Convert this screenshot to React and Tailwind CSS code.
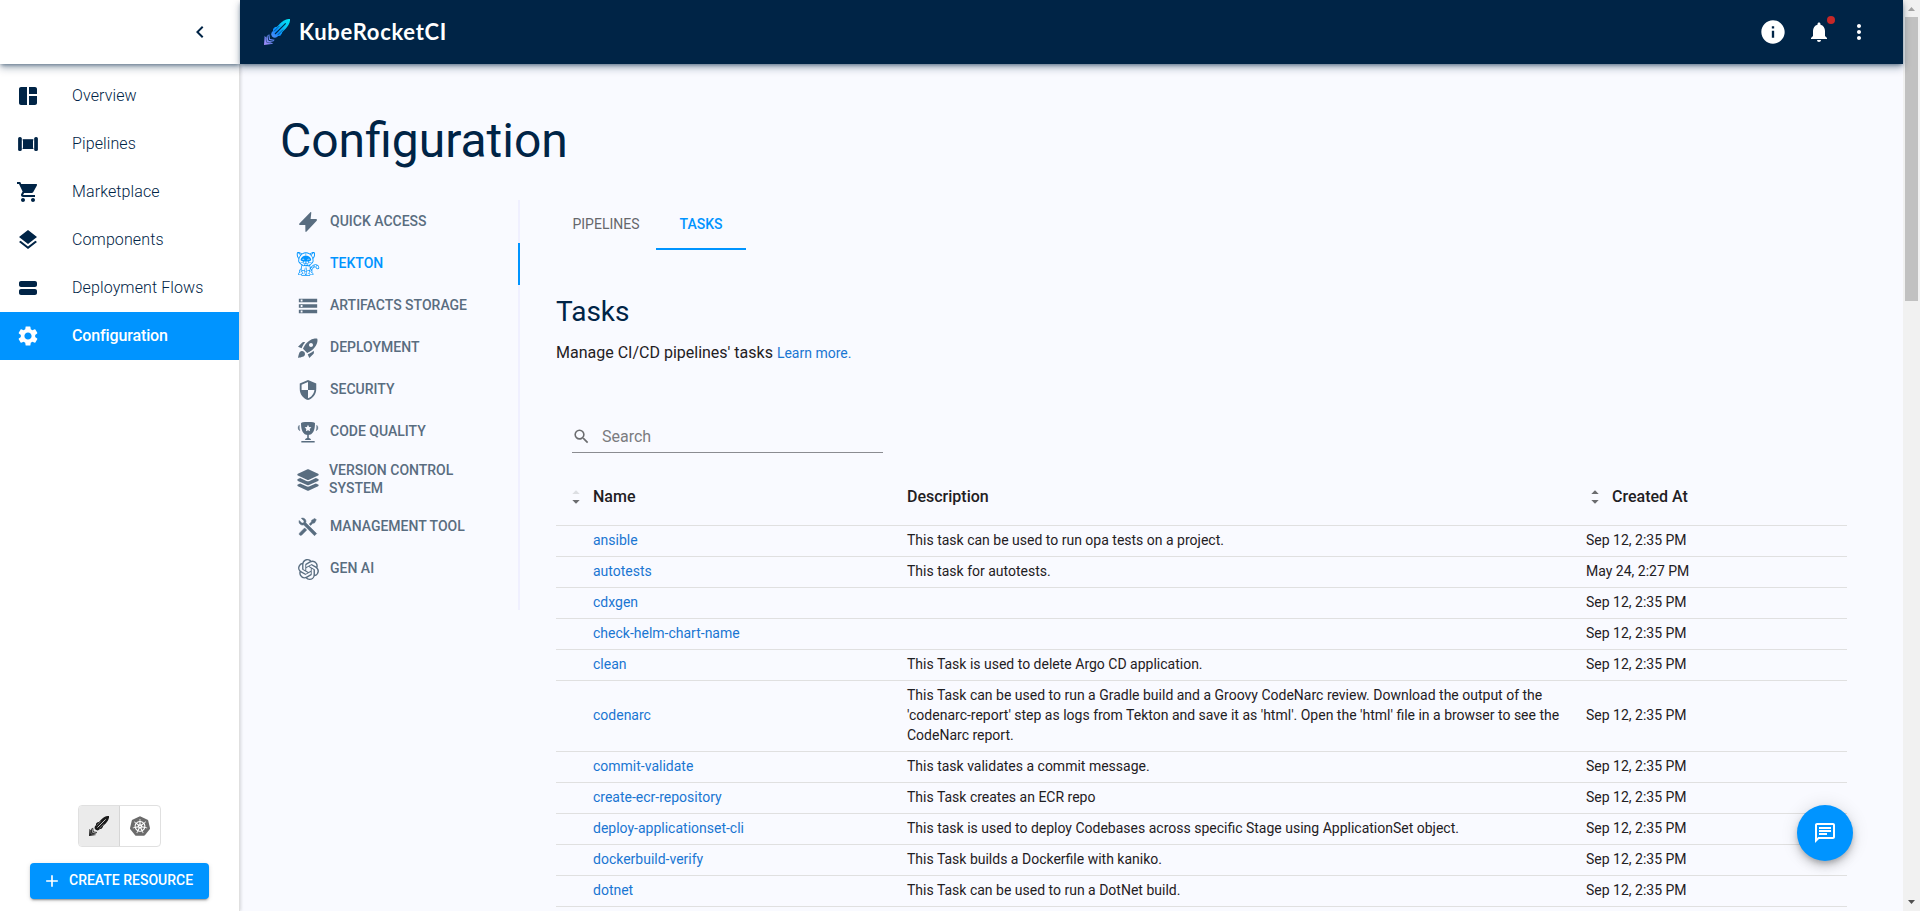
import React from "react";
import {
  MdSpaceDashboard,
  MdShoppingCart,
  MdLayers,
  MdViewStream,
  MdSettings,
  MdStorage,
  MdRocketLaunch,
  MdSecurity,
  MdOutlineChat,
  MdInfo,
  MdNotifications,
  MdMoreVert,
  MdChevronLeft,
  MdSearch,
  MdAdd,
} from "react-icons/md";
import { SiTekton, SiOpenai, SiKubernetes } from "react-icons/si";
import { RiToolsFill } from "react-icons/ri";
import { FaLayerGroup } from "react-icons/fa6";

function PipelineIcon({ size = 24 }) {
  return (
    <svg width={size} height={size} viewBox="0 0 24 24" fill="currentColor">
      <rect x="2.1" y="5" width="3.7" height="14" rx="1.6" />
      <rect x="18.2" y="5" width="3.7" height="14" rx="1.6" />
      <rect x="7" y="7.2" width="10" height="9.8" />
      <path d="M5.8 7.9h1.2M5.8 16.4h1.2M17 7.9h1.2M17 16.4h1.2" stroke="currentColor" strokeWidth="0.8" opacity="0.5" />
    </svg>
  );
}

function BoltIcon({ size = 24 }) {
  return (
    <svg width={size} height={size} viewBox="0 0 24 24" fill="currentColor">
      <path d="M14.4 2.2c.5-.4 1-.1.9.5l-.7 6.4h5.5c.9 0 1.2.9.6 1.6L10.6 21.6c-.6.6-1.2.4-1.2-.4L9.3 15H4.2c-1 0-1.4-.9-.8-1.6z" />
    </svg>
  );
}

function TrophyIcon({ size = 24 }) {
  return (
    <svg width={size} height={size} viewBox="0 0 24 24" fill="currentColor">
      <path
        fillRule="evenodd"
        d="M5 3.2C5 2.3 7.500 2 12 2s7 .3 7 1.200C19 10 17 15 12 15S5 10 5 3.200zM12 4.800l-1.050 2.150-2.350.33 1.700 1.650-.4 2.350L12 10.200l2.100 1.080-.4-2.350 1.700-1.650-2.350-.33z"
      />
      <path d="M3.300 5.200C2.400 6 2.100 7 2.200 8.300c.1 1.200.6 2 1.600 2.500-.5-1.600-.7-3.500-.5-5.600zM20.700 5.200c.9.8 1.200 1.800 1.100 3.100-.1 1.200-.6 2-1.600 2.500.5-1.600.7-3.500.5-5.600z" stroke="currentColor" strokeWidth="0.4" />
      <path d="M11.200 14.500h1.600v4.300h-1.600z" />
      <path d="M9 19.900c.2-1.500 1.500-2 3-2s2.800.5 3 2z" />
      <rect x="5.300" y="20.900" width="13.400" height="1.700" rx=".3" />
    </svg>
  );
}

function ToolsIcon({ size = 24 }) {
  return <RiToolsFill size={size} stroke="currentColor" strokeWidth="0.5" />;
}

function RocketMark({ size, fill, line }) {
  return (
    <svg width={size} height={size} viewBox="0 0 78 78">
      <defs>
        <linearGradient id="rocketFill" x1="78" y1="0" x2="0" y2="78" gradientUnits="userSpaceOnUse">
          <stop offset="0" stopColor="#00e5f5" />
          <stop offset="0.24" stopColor="#06c8f5" />
          <stop offset="0.5" stopColor="#0a8cff" />
          <stop offset="0.7" stopColor="#5a8cf5" />
          <stop offset="1" stopColor="#a78bfa" />
        </linearGradient>
      </defs>
      <g fill={fill}>
        <path d="M78 0C79 11 73 21 65 29L39 54C35 57 29 57 25 53C21 49 21 43 24 39L49 13C57 5 67-1 78 0Z" />
        <path d="M27 30L33 24L42 23L46 17L50 22L28 44Z" />
        <path d="M56 33L54 43L49 50L37 52L34 48L58 27Z" />
        <path d="M2 50L7 57L9 50L16 46L18 60L32 62L27 69L19 70L28 74L0 78Z" />
      </g>
      <g fill="none" stroke={line}>
        <path d="M65 13L33 45" strokeWidth="3.200" />
        <path d="M46 21L30 37" strokeWidth="1.600" />
        <path d="M57 32L41 48" strokeWidth="1.600" />
        <path d="M12 49L14 64L29 67" strokeWidth="2.600" />
        <path d="M6 57L8 70L22 72" strokeWidth="1.300" />
      </g>
    </svg>
  );
}

const navItems = [
  { label: "Overview", icon: MdSpaceDashboard },
  { label: "Pipelines", icon: PipelineIcon },
  { label: "Marketplace", icon: MdShoppingCart },
  { label: "Components", icon: MdLayers },
  { label: "Deployment Flows", icon: MdViewStream },
  { label: "Configuration", icon: MdSettings, active: true },
];

const sections = [
  { label: "Quick access", icon: BoltIcon, size: 24 },
  { label: "Tekton", icon: SiTekton, size: 24, active: true },
  { label: "Artifacts storage", icon: MdStorage, size: 22 },
  { label: "Deployment", icon: MdRocketLaunch, size: 24 },
  { label: "Security", icon: MdSecurity, size: 22 },
  { label: "Code quality", icon: TrophyIcon, size: 24 },
  { label: "Version Control System", icon: FaLayerGroup, size: 24, tall: true },
  { label: "Management tool", icon: ToolsIcon, size: 26 },
  { label: "Gen AI", icon: SiOpenai, size: 21 },
];

const tasks = [
  ["ansible", "This task can be used to run opa tests on a project.", "Sep 12, 2:35 PM"],
  ["autotests", "This task for autotests.", "May 24, 2:27 PM"],
  ["cdxgen", "", "Sep 12, 2:35 PM"],
  ["check-helm-chart-name", "", "Sep 12, 2:35 PM"],
  ["clean", "This Task is used to delete Argo CD application.", "Sep 12, 2:35 PM"],
  [
    "codenarc",
    "This Task can be used to run a Gradle build and a Groovy CodeNarc review. Download the output of the 'codenarc-report' step as logs from Tekton and save it as 'html'. Open the 'html' file in a browser to see the CodeNarc report.",
    "Sep 12, 2:35 PM",
  ],
  ["commit-validate", "This task validates a commit message.", "Sep 12, 2:35 PM"],
  ["create-ecr-repository", "This Task creates an ECR repo", "Sep 12, 2:35 PM"],
  ["deploy-applicationset-cli", "This task is used to deploy Codebases across specific Stage using ApplicationSet object.", "Sep 12, 2:35 PM"],
  ["dockerbuild-verify", "This Task builds a Dockerfile with kaniko.", "Sep 12, 2:35 PM"],
  ["dotnet", "This Task can be used to run a DotNet build.", "Sep 12, 2:35 PM"],
];

function SortArrows({ upClass }) {
  return (
    <svg width="8" height="14" viewBox="0 0 8 14" className="text-[#6b6c6f]" fill="currentColor">
      <path d="M0.300 4L4 0.300L7.700 4z" className={upClass} />
      <path d="M0.300 10L4 13.700L7.700 10z" />
    </svg>
  );
}

function Sidebar() {
  return (
    <aside className="relative z-10 flex w-60 shrink-0 flex-col border-r border-[#e0e0e0] bg-white shadow-[1px_0_3px_rgba(0,0,0,0.14)]">
      <div className="z-10 -mr-px flex h-16 shrink-0 items-center justify-end bg-white pr-7 text-[#002446] shadow-[0_2px_4px_-1px_rgba(0,36,70,0.5),0_4px_8px_rgba(0,36,70,0.3)]">
        <MdChevronLeft size={24} />
      </div>
      <nav className="pt-2">
        {navItems.map(({ label, icon: Icon, active }) => (
          <a
            key={label}
            className={
              active
                ? "flex h-12 items-center gap-8 bg-[#0094ff] pl-4 text-base font-medium tracking-[-0.008em] text-white"
                : "flex h-12 items-center gap-8 pl-4 text-base font-light tracking-[0.007em] text-[#002446]"
            }
          >
            <Icon size={24} />
            <span>{label}</span>
          </a>
        ))}
      </nav>
      <div className="mt-auto flex flex-col items-center gap-4 pb-3">
        <div className="flex h-[42px] w-[83px] overflow-hidden rounded border border-[#e0e0e0]">
          <button className="flex w-[41px] items-center justify-center border-r border-[#d6d6d6] bg-[#ebebeb]">
            <RocketMark size={20} fill="#1a1a1a" line="#ebebeb" />
          </button>
          <button className="flex flex-1 items-center justify-center pr-px text-[#6b6b6b]">
            <SiKubernetes size={20} />
          </button>
        </div>
        <button className="flex h-9 w-[179px] items-center rounded bg-[#0094ff] pl-3 text-sm font-medium text-white shadow-[0_3px_1px_-2px_rgba(0,0,0,0.2),0_2px_2px_rgba(0,0,0,0.14),0_1px_5px_rgba(0,0,0,0.12)]">
          <MdAdd size={20} />
          <span className="pb-0.5 pl-[7px] uppercase">Create resource</span>
        </button>
      </div>
    </aside>
  );
}

function Header() {
  return (
    <header className="z-20 flex h-16 shrink-0 items-center bg-[#002446] pr-8 pl-6 text-white shadow-[0_2px_4px_-1px_rgba(0,36,70,0.5),0_4px_8px_rgba(0,36,70,0.3)]">
      <RocketMark size={26} fill="url(#rocketFill)" line="#002446" />
      <span className="pb-0.5 pl-[9px] font-[Lato] text-[22px] font-bold tracking-[0.032em]">KubeRocketCI</span>
      <div className="ml-auto flex items-center">
        <MdInfo size={28} />
        <span className="relative ml-5">
          <MdNotifications size={24} />
          <span className="absolute -top-1 -right-1 size-2 rounded-full bg-[#c62828]" />
        </span>
        <MdMoreVert size={24} className="ml-4" />
      </div>
    </header>
  );
}

function SectionMenu() {
  return (
    <div className="flex h-[410px] w-60 shrink-0 flex-col border-r-2 border-[#f0f0ff] pt-px">
      {sections.map(({ label, icon: Icon, size, active, tall }) => (
        <a
          key={label}
          className={
            active
              ? "-mr-0.5 flex h-[42px] shrink-0 items-center gap-2.5 border-r-2 border-[#0094ff] pl-4 text-sm font-medium text-[#0094ff] uppercase"
              : tall
                ? "flex h-[53px] shrink-0 items-center gap-[9px] pr-9 pl-4 text-sm leading-[18px] font-medium text-[#596d80] uppercase"
                : "flex h-[42px] shrink-0 items-center gap-2.5 pl-4 text-sm font-medium text-[#596d80] uppercase"
          }
        >
          <span className="flex size-6 shrink-0 items-center justify-center">
            <Icon size={size} />
          </span>
          <span className="pb-0.5">{label}</span>
        </a>
      ))}
    </div>
  );
}

function TaskTable() {
  return (
    <div className="w-[1291px] text-sm leading-5 text-[#1f2023]">
      <div className="flex h-[59px] items-center border-b border-[#e0e0e0] pt-0.5 text-base font-medium text-[#1f2023]">
        <div className="flex w-[351px] items-center gap-[13px] pl-4">
          <SortArrows upClass="opacity-20" />
          <span>Name</span>
        </div>
        <div className="w-[679px]">Description</div>
        <div className="flex items-center gap-[13px] pl-[5px]">
          <SortArrows upClass="opacity-100" />
          <span>Created At</span>
        </div>
      </div>
      {tasks.map(([name, description, created]) => (
        <div key={name} className="flex min-h-[31px] items-center border-b border-[#e0e0e0] pt-1 pb-1.5">
          <a className="w-[351px] pl-[37px] text-[#1976d2]">{name}</a>
          <div className="w-[679px] pr-5">{description}</div>
          <div>{created}</div>
        </div>
      ))}
    </div>
  );
}

function Scrollbar() {
  return (
    <div className="flex w-[17px] shrink-0 flex-col items-center justify-between bg-[#f1f1f1]">
      <div className="flex flex-col items-center">
        <svg width="17" height="17" viewBox="0 0 17 17" fill="#a3a3a3">
          <path d="M5 11L8.500 7L12 11z" />
        </svg>
        <div className="h-[284px] w-[13px] bg-[#c1c1c1]" />
      </div>
      <svg width="17" height="17" viewBox="0 0 17 17" fill="#505050">
        <path d="M5 6L8.500 10L12 6z" />
      </svg>
    </div>
  );
}

export default function App() {
  return (
    <div className="relative flex h-[911px] w-[1920px] overflow-hidden bg-[#f9faff] font-[Roboto,sans-serif] text-[#002446]">
      <Sidebar />
      <div className="z-10 flex min-w-0 flex-1 flex-col">
        <Header />
        <main className="flex flex-1 flex-col overflow-hidden pl-10">
          <h1 className="pt-[49px] text-[48px] leading-[56px]">Configuration</h1>
          <div className="flex pt-[31px]">
            <SectionMenu />
            <div className="pl-9">
              <div className="flex h-[50px] text-sm font-medium uppercase">
                <div className="flex w-[100px] items-center justify-center pb-0.5 font-normal text-[#66676b]">Pipelines</div>
                <div className="flex w-[90px] items-center justify-center border-b-2 border-[#0094ff] text-[#0094ff]">Tasks</div>
              </div>
              <h2 className="pt-11 text-[28px] leading-9">Tasks</h2>
              <p className="pt-[11px] text-base leading-6 text-[#1f2023]">
                Manage CI/CD pipelines' tasks <a className="text-sm text-[#1976d2]">Learn more.</a>
              </p>
              <div className="mt-[53px] ml-4 flex h-[35px] w-[311px] items-center gap-[11px] border-b border-[#8b8c91] pt-[3px] text-base text-[#7b7c80]">
                <MdSearch size={19} className="text-[#6b6c6f]" />
                <span>Search</span>
              </div>
              <div className="pt-3.5">
                <TaskTable />
              </div>
            </div>
          </div>
        </main>
      </div>
      <Scrollbar />
      <button className="absolute right-[67px] bottom-[50px] z-30 flex size-14 items-center justify-center rounded-full bg-[#0094ff] text-white shadow-[0_3px_5px_-1px_rgba(0,0,0,0.2),0_6px_10px_rgba(0,0,0,0.14),0_1px_18px_rgba(0,0,0,0.12)]">
        <MdOutlineChat size={24} />
      </button>
    </div>
  );
}
